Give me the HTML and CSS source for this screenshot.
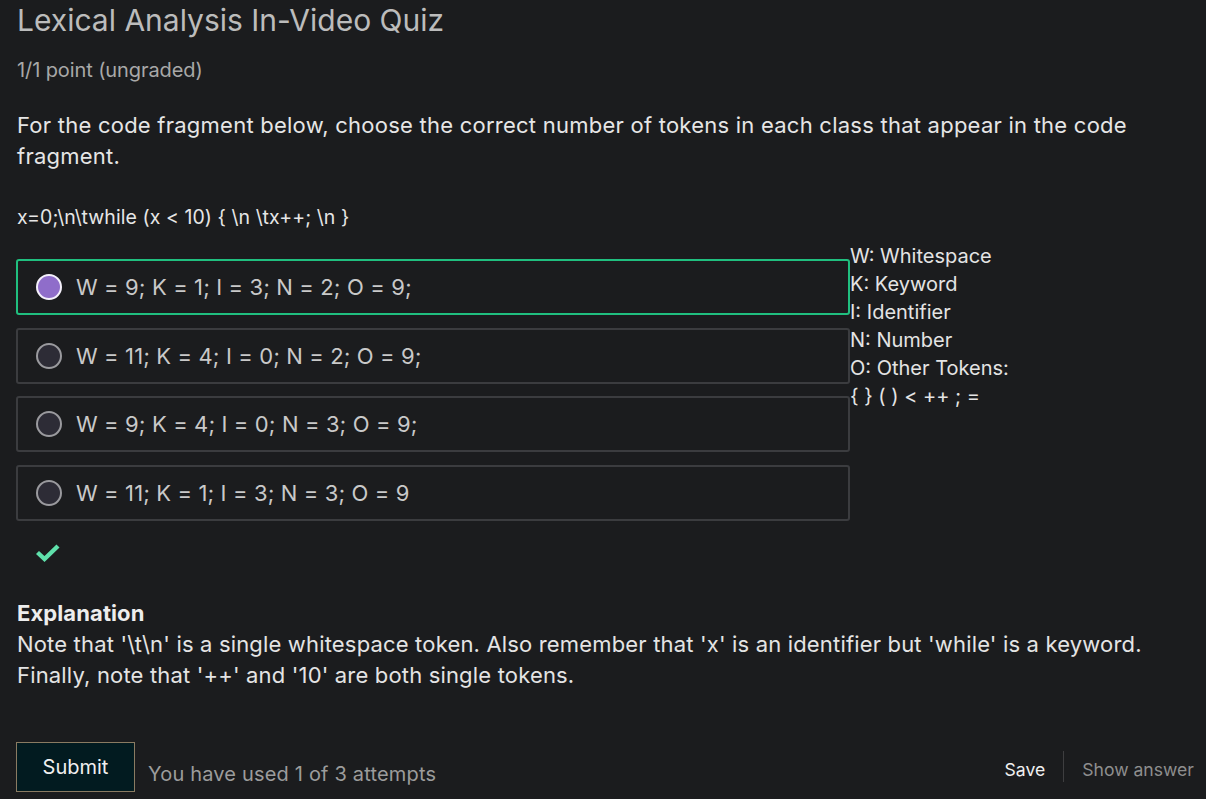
FILE: index.html
```html
<!DOCTYPE html>
<html lang="en">
<head>
<meta charset="utf-8">
<title>Lexical Analysis In-Video Quiz</title>
<link rel="stylesheet" href="styles.css">
</head>
<body>
<main class="problem">
  <h2 class="title">Lexical Analysis In-Video Quiz</h2>
  <div class="points">1/1 point (ungraded)</div>
  <p class="prompt">For the code fragment below, choose the correct number of tokens in each class that appear in the code fragment.</p>
  <p class="code">x=0;\n\twhile (x &lt; 10) { \n \tx++; \n }</p>

  <div class="answer-area">
    <div class="options">
      <label class="option selected"><span class="radio"></span><span class="opt-text">W = 9; K = 1; I = 3; N = 2; O = 9;</span></label>
      <label class="option"><span class="radio"></span><span class="opt-text">W = 11; K = 4; I = 0; N = 2; O = 9;</span></label>
      <label class="option"><span class="radio"></span><span class="opt-text">W = 9; K = 4; I = 0; N = 3; O = 9;</span></label>
      <label class="option"><span class="radio"></span><span class="opt-text">W = 11; K = 1; I = 3; N = 3; O = 9</span></label>
    </div>
    <div class="legend">
      <div>W: Whitespace</div>
      <div>K: Keyword</div>
      <div>I: Identifier</div>
      <div>N: Number</div>
      <div>O: Other Tokens:</div>
      <div>{ } ( ) &lt; ++ ; =</div>
    </div>
  </div>

  <div class="status">
    <svg width="26" height="20" viewBox="0 0 26 20"><path d="M2.5 9.5 L9.5 16 L23 3" fill="none" stroke="#5fe0ab" stroke-width="4.4" stroke-linecap="butt" stroke-linejoin="miter"/></svg>
  </div>

  <section class="explanation">
    <h3>Explanation</h3>
    <p>Note that '\t\n' is a single whitespace token. Also remember that 'x' is an identifier but 'while' is a keyword. Finally, note that '++' and '10' are both single tokens.</p>
  </section>

  <div class="actions">
    <div class="left-actions">
      <button class="submit">Submit</button>
      <span class="attempts">You have used 1 of 3 attempts</span>
    </div>
    <div class="right-actions">
      <button class="link save">Save</button>
      <span class="divider"></span>
      <button class="link show">Show answer</button>
    </div>
  </div>
</main>
</body>
</html>
```

FILE: styles.css
```css
* { box-sizing: border-box; }
html, body { margin: 0; padding: 0; background: #1b1c1e; }
body {
  font-family: Inter, "Noto Sans", sans-serif;
  color: #e2e2e2;
  width: 1206px;
  height: 799px;
  overflow: hidden;
}
.problem { padding: 0 12px 0 16px; }
.title {
  margin: 0;
  padding-top: 1px;
  font-size: 30px;
  font-weight: 400;
  color: #bcbcbc;
  line-height: 38px;
  padding-left: 1px;
}
.points {
  margin-top: 19px;
  font-size: 20px;
  color: #a8a8a8;
  line-height: 24px;
  padding-left: 1px;
  letter-spacing: -0.1px;
}
.prompt {
  margin: 28px 0 0 0;
  font-size: 22px;
  line-height: 31px;
  color: #e6e6e6;
  padding-left: 1px;
  letter-spacing: 0.24px;
}
.code {
  margin: 32px 0 0 0;
  font-size: 19.5px;
  line-height: 26px;
  color: #e6e6e6;
  padding-left: 1px;
  letter-spacing: 0.07px;
}
.answer-area {
  display: flex;
  align-items: flex-start;
  margin-top: 12px;
}
.options {
  width: 834px;
  display: flex;
  flex-direction: column;
  gap: 12.6px;
  padding-top: 17px;
}
.option {
  display: flex;
  align-items: center;
  height: 56px;
  border: 2px solid #3b3c3f;
  border-radius: 3px;
  padding-left: 18px;
}
.option.selected { border-color: #20bf7f; }
.radio {
  width: 26px;
  height: 26px;
  border-radius: 50%;
  border: 2px solid #9a9a9e;
  background: #2d2c36;
  flex: none;
}
.option.selected .radio {
  border: 2.5px solid #f4f0fb;
  background: #8f6dca;
}
.opt-text {
  margin-left: 14px;
  font-size: 22px;
  color: #c9c9c9;
  letter-spacing: 0.12px;
}
.legend {
  font-size: 20px;
  line-height: 28px;
  color: #e4e4e4;
}
.status {
  padding: 22px 0 0 35px;
  margin-left: -16px;
  height: 60px;
}
.status svg { display: block; }
.explanation { margin-top: 18px; padding-left: 1px; }
.explanation h3 {
  margin: 0;
  font-size: 22px;
  font-weight: 700;
  line-height: 28px;
  color: #ededed;
  letter-spacing: 0.1px;
}
.explanation p {
  margin: 2px 0 0 0;
  font-size: 22px;
  line-height: 31px;
  color: #e4e4e4;
  letter-spacing: 0.17px;
}
.actions {
  margin-top: 51px;
  display: flex;
  justify-content: space-between;
  align-items: center;
}
.left-actions { display: flex; align-items: flex-end; }
.submit {
  font-family: inherit;
  width: 119px;
  height: 50px;
  background: #021b20;
  border: 1px solid #8a7b62;
  border-radius: 0;
  color: #f0f0f0;
  font-size: 20px;
  padding: 0;
}
.attempts {
  margin-left: 13px;
  font-size: 20px;
  color: #9c9c9c;
  line-height: 24px;
  margin-bottom: 6px;
  letter-spacing: 0.18px;
}
.right-actions { display: flex; align-items: center; }
.link {
  font-family: inherit;
  background: none;
  border: 0;
  padding: 0;
  font-size: 17.6px;
  line-height: 31px;
  margin-top: 5px;
}
.save { color: #f0f0f0; }
.show { color: #8e8e8e; }
.divider {
  width: 1px;
  height: 31px;
  background: #3e3e40;
  margin: 0 18px 0 18px;
}
```
